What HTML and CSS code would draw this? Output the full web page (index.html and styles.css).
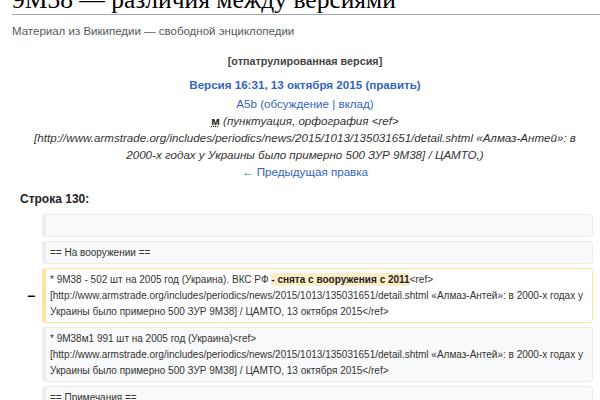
FILE: index.html
```html
<!DOCTYPE html>
<html lang="ru">
<head>
<meta charset="utf-8">
<link rel="stylesheet" href="styles.css">
</head>
<body>
<div class="content">
  <h1 class="title">9M38 — различия между версиями</h1>
  <div class="sub">Материал из Википедии — свободной энциклопедии</div>
  <div class="diff">
    <div class="otitle">
      <div class="patrolled">[отпатрулированная версия]</div>
      <div class="rev"><a class="lnk b">Версия 16:31, 13 октября 2015</a> <span class="b lnk">(<a>править</a>)</span></div>
      <div class="user"><a class="lnk">A5b</a> <span class="lnk">(<a>обсуждение</a> | <a>вклад</a>)</span></div>
      <div class="comment"><abbr class="minor">м</abbr> <i>(пунктуация, орфография &lt;ref&gt;<br>[http://www.armstrade.org/includes/periodics/news/2015/1013/135031651/detail.shtml «Алмаз-Антей»: в<br>2000-х годах у Украины было примерно 500 ЗУР 9М38] / ЦАМТО,)</i></div>
      <div class="prev"><a class="lnk">← Предыдущая правка</a></div>
    </div>
    <div class="lineno">Строка 130:</div>
    <div class="rows">
      <div class="row"><div class="marker"></div><div class="box ctx">&nbsp;</div></div>
      <div class="row"><div class="marker"></div><div class="box ctx">== На вооружении ==</div></div>
      <div class="row"><div class="marker">−</div><div class="box del">* 9M38 - 502 шт на 2005 год (Украина). ВКС РФ <span class="chg">- снята с вооружения с 2011</span>&lt;ref&gt;<br>[http://www.armstrade.org/includes/periodics/news/2015/1013/135031651/detail.shtml «Алмаз-Антей»: в 2000-х годах у<br>Украины было примерно 500 ЗУР 9М38] / ЦАМТО, 13 октября 2015&lt;/ref&gt;</div></div>
      <div class="row"><div class="marker"></div><div class="box ctx">* 9M38м1 991 шт на 2005 год (Украина)&lt;ref&gt;<br>[http://www.armstrade.org/includes/periodics/news/2015/1013/135031651/detail.shtml «Алмаз-Антей»: в 2000-х годах у<br>Украины было примерно 500 ЗУР 9М38] / ЦАМТО, 13 октября 2015&lt;/ref&gt;</div></div>
      <div class="row"><div class="marker"></div><div class="box ctx">== Примечания ==</div></div>
    </div>
  </div>
</div>
</body>
</html>
```
FILE: styles.css
```css
html, body {
  margin: 0;
  padding: 0;
  background: #fff;
  overflow: hidden;
}
body {
  font-family: "Liberation Sans", Arial, sans-serif;
  color: #222;
}
.content {
  padding-left: 12px;
}
.title {
  font-family: "Liberation Serif", "Times New Roman", serif;
  font-weight: normal;
  font-size: 25.5px;
  line-height: 29px;
  margin: -15px 0 0 0;
  color: #000;
  border-bottom: 1px solid #a2a9b1;
  white-space: nowrap;
}
.sub {
  font-size: 11.5px;
  color: #54595d;
  margin-top: 9px;
  line-height: 14px;
}
.diff {
  margin-left: 8px;
  margin-right: 7px;
}
.otitle {
  text-align: center;
  font-size: 11.6px;
  line-height: 17px;
  margin-top: 15px;
  padding-right: 3px;
}
.patrolled {
  font-weight: bold;
  color: #444;
  font-size: 10.8px;
}
.rev {
  margin-top: 6px;
}
.user {
  margin-top: 2px;
}
.lnk, .lnk a {
  color: #3366bb;
}
.b {
  font-weight: bold;
}
.minor {
  font-weight: bold;
  text-decoration: underline dotted;
  color: #222;
  font-style: normal;
}
.comment i {
  color: #333;
}
.lineno {
  font-weight: bold;
  font-size: 12px;
  line-height: 17px;
  margin-top: 11px;
  color: #222;
}
.rows {
  display: flex;
  flex-direction: column;
  gap: 4px;
  margin-top: 6px;
}
.row {
  display: flex;
}
.marker {
  width: 22px;
  flex: none;
  text-align: center;
  font-weight: bold;
  font-size: 14px;
  line-height: 16px;
  align-self: center;
  color: #000;
}
.box {
  flex: 1;
  font-size: 10px;
  line-height: 16px;
  padding: 3px 4px 2px 4px;
  border-style: solid;
  border-width: 1px 1px 1px 4px;
  border-radius: 4px;
  color: #333;
  white-space: nowrap;
  overflow: hidden;
}
.ctx {
  background: #f8f9fa;
  border-color: #eaecf0;
}
.del {
  background: #fff;
  border-color: #ffe49c;
}
.chg {
  background: #feeec8;
  font-weight: bold;
  color: #222;
  border-radius: 2px;
  padding: 1px 0;
}
```
